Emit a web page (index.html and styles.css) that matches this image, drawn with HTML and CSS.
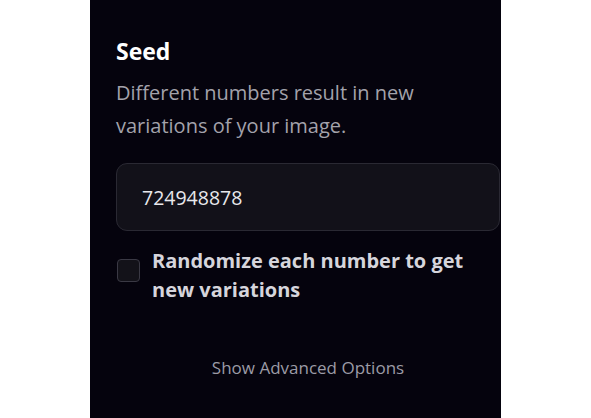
FILE: index.html
```html
<!DOCTYPE html>
<html lang="en">
<head>
<meta charset="utf-8">
<link rel="stylesheet" href="styles.css">
</head>
<body>
<div class="page">
  <div class="panel">
    <h2 class="title">Seed</h2>
    <p class="desc">Different numbers result in new variations of your image.</p>
    <div class="field">724948878</div>
    <label class="check">
      <span class="box"></span>
      <span class="check-label">Randomize each number to get new variations</span>
    </label>
    <div class="advanced">Show Advanced Options</div>
  </div>
</div>
</body>
</html>
```
FILE: styles.css
```css
html, body {
  margin: 0;
  padding: 0;
  background: #ffffff;
}
body {
  font-family: "Open Sans", "Noto Sans", sans-serif;
}
.page {
  display: flex;
  height: 418px;
  padding-left: 90px;
}
.panel {
  width: 411px;
  height: 418px;
  background: #05030d;
  box-sizing: border-box;
  padding: 38px 1px 0 26px;
  display: flex;
  flex-direction: column;
}
.title {
  margin: 0;
  font-size: 23px;
  font-weight: 700;
  color: #ffffff;
  line-height: 26px;
}
.desc {
  margin: 12px 0 0;
  font-size: 20px;
  line-height: 33px;
  color: #a3a2ab;
  width: 320px;
}
.field {
  margin-top: 21px;
  height: 68px;
  box-sizing: border-box;
  border: 1px solid #2a2933;
  border-radius: 11px;
  background: #121119;
  color: #e8e8ec;
  font-size: 19.5px;
  display: flex;
  align-items: center;
  padding-left: 25px;
}
.check {
  margin-top: 15px;
  display: flex;
  align-items: flex-start;
  gap: 12px;
}
.box {
  flex: none;
  width: 23px;
  height: 23px;
  box-sizing: border-box;
  border: 1px solid #3a3944;
  border-radius: 4px;
  background: #131219;
  margin-top: 13px;
  margin-left: 1px;
}
.check-label {
  font-size: 20px;
  font-weight: 700;
  line-height: 29px;
  color: #d6d5dc;
  width: 330px;
}
.advanced {
  margin-top: 52px;
  text-align: center;
  font-size: 17px;
  color: #9c9ba6;
}
```
